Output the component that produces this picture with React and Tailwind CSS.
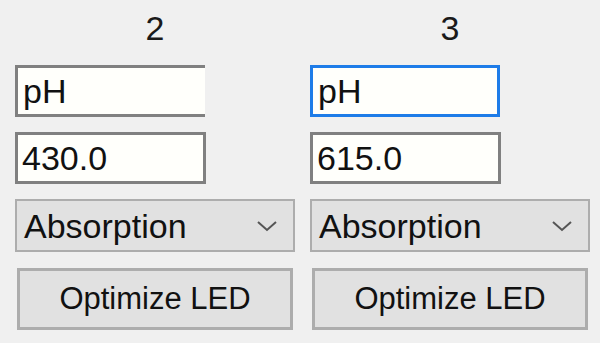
const Chevron = () => (
  <svg width="20" height="12" viewBox="0 0 20 12" className="shrink-0">
    <path d="M1 2 L10 10 L19 2" fill="none" stroke="#555" strokeWidth="2" />
  </svg>
);

const Column = ({ num, focused, first, value }) => (
  <div className="flex flex-col w-[280px]">
    {/* HEADER */}
    <div className="h-[40px] mt-[8px] text-center text-[34px] leading-[40px] text-[#1a1a1a]">
      {num}
    </div>

    {/* NAME */}
    <div
      className={`mt-[17px] h-[52px] w-[190px] flex items-center pl-[5px] bg-[#fffffb] text-[34px] leading-[40px] text-[#111] border-[3px] ${
        focused
          ? "border-[#1e7ce8]"
          : first
          ? "border-[#808080] border-r-0"
          : "border-[#808080]"
      }`}
    >
      pH
    </div>

    {/* WAVELENGTH */}
    <div className="mt-[15px] h-[52px] w-[191px] flex items-center pl-[4px] bg-[#fffffb] text-[34px] leading-[40px] text-[#111] border-[3px] border-[#808080]">
      {value}
    </div>

    {/* MODE */}
    <div className="mt-[15px] h-[53px] w-[280px] flex items-center justify-between pl-[7px] pr-[16px] bg-[#e1e1e1] text-[34px] leading-[40px] text-[#111] border-2 border-[#adadad]">
      <span>Absorption</span>
      <Chevron />
    </div>

    {/* BUTTON */}
    <div className="mt-[16px] mx-[2px] h-[62px] flex items-center justify-center bg-[#e1e1e1] text-[31px] leading-[40px] text-[#111] border-[3px] border-[#adadad]">
      Optimize LED
    </div>
  </div>
);

export default function App() {
  return (
    <div
      className="w-[600px] h-[343px] bg-[#f0f0f0] flex gap-[15px] pl-[15px] overflow-hidden"
      style={{ fontFamily: '"Liberation Sans", Arial, sans-serif' }}
    >
      <Column num="2" first value="430.0" />
      <Column num="3" focused value="615.0" />
    </div>
  );
}
